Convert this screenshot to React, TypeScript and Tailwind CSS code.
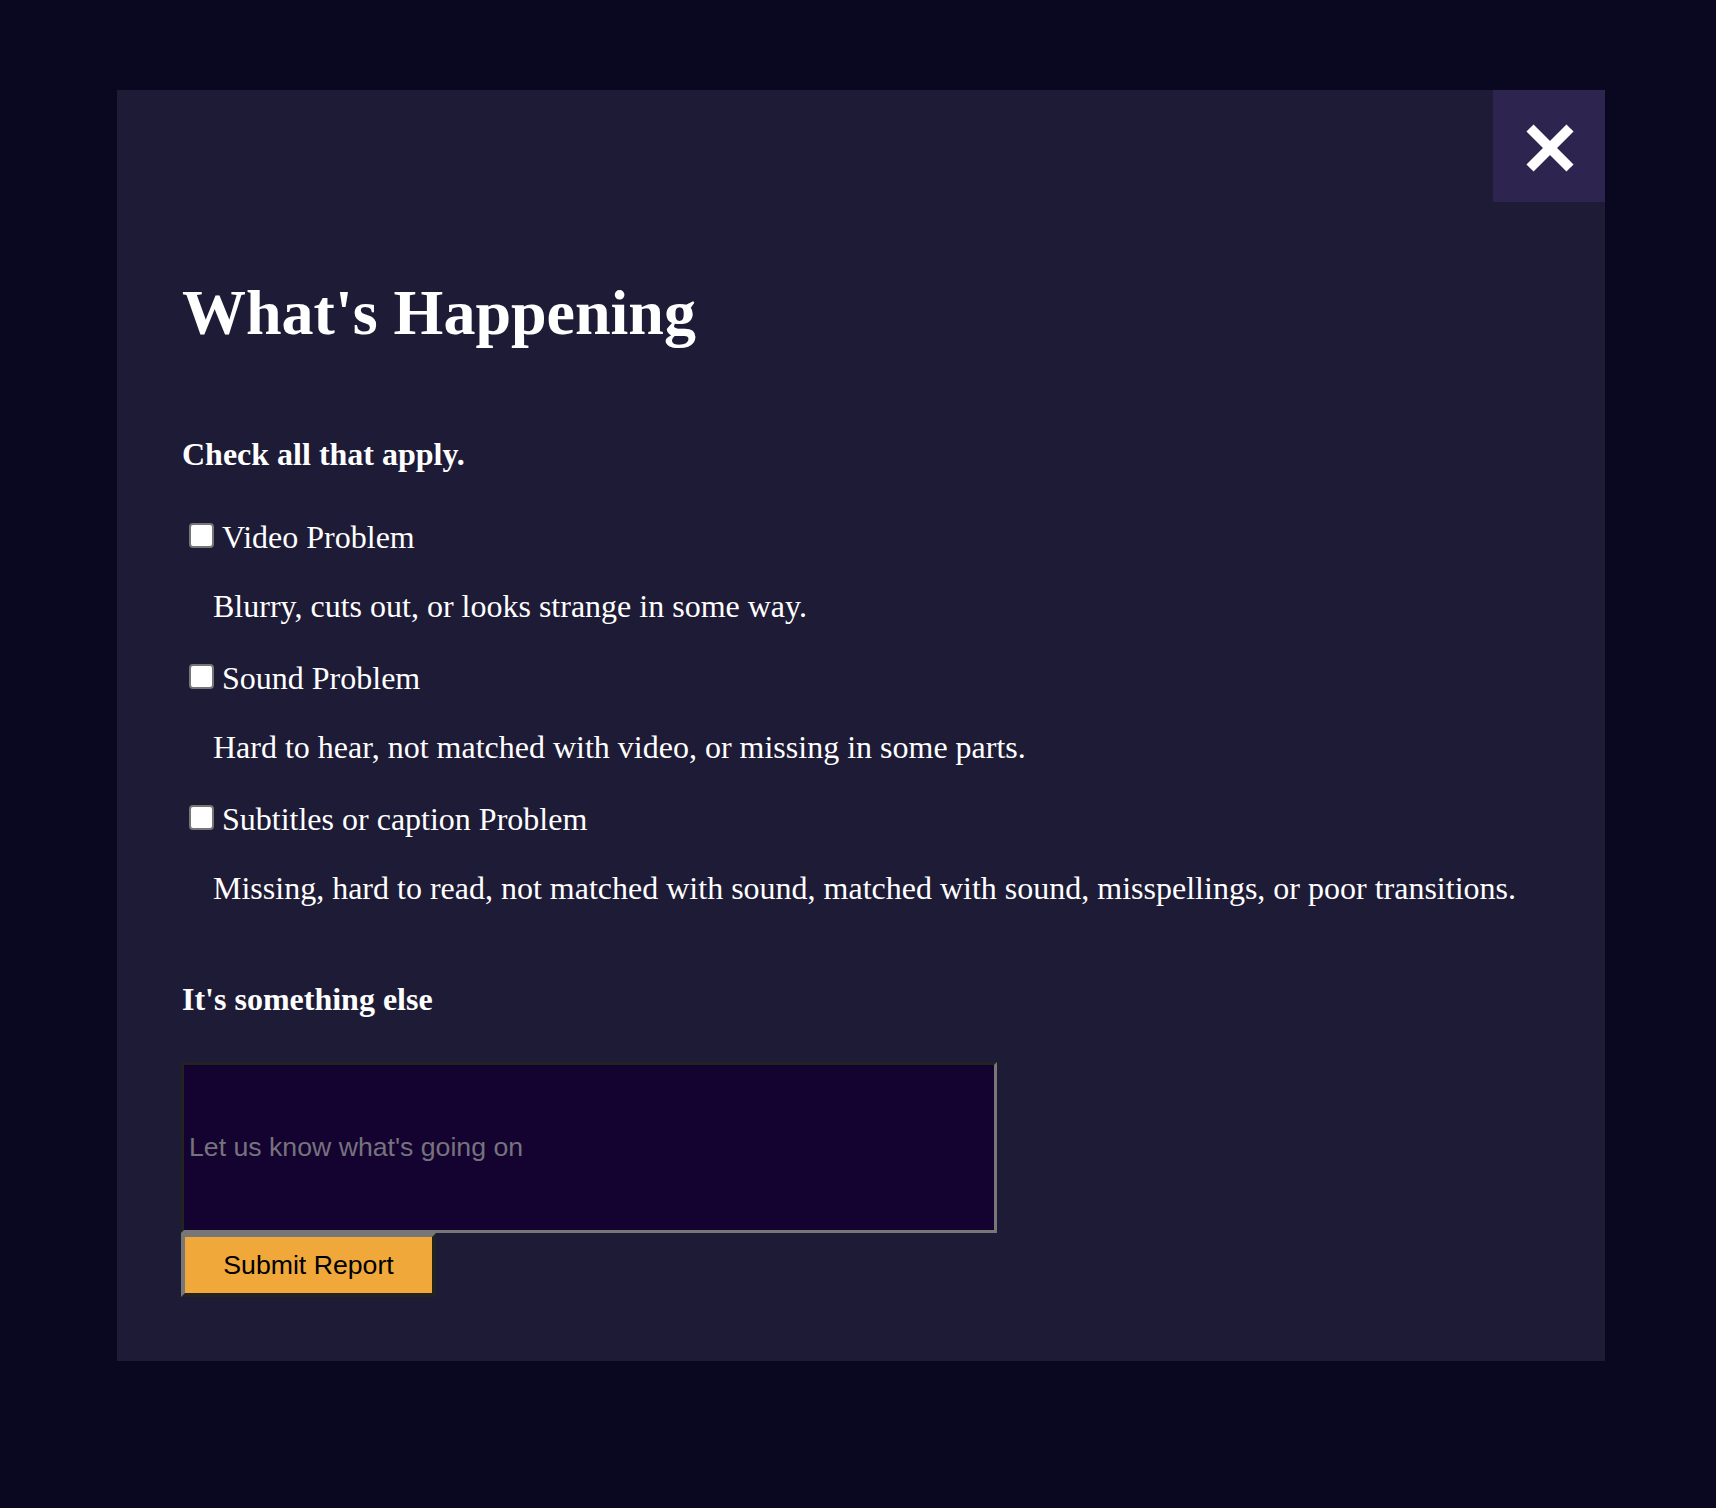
import { useState } from 'react';

const problems = [
  { id: 'video', label: 'Video Problem', desc: 'Blurry, cuts out, or looks strange in some way.' },
  { id: 'sound', label: 'Sound Problem', desc: 'Hard to hear, not matched with video, or missing in some parts.' },
  {
    id: 'subtitles',
    label: 'Subtitles or caption Problem',
    desc: 'Missing, hard to read, not matched with sound, matched with sound, misspellings, or poor transitions.',
  },
];

export default function App() {
  const [checked, setChecked] = useState<Record<string, boolean>>({});
  const [note, setNote] = useState('');

  return (
    <div className="min-h-screen bg-[#0a0720] pt-[90px] pb-[147px] font-['Liberation_Serif',serif] text-white">
      <div className="relative ml-[117px] w-[1488px] bg-[#1e1b36] pl-[65px] pt-[191px] pb-[64px]">
        {/* Close */}
        <button className="absolute right-0 top-0 flex h-[112px] w-[112px] items-center justify-center bg-[#2d2550]">
          <svg width="52" height="52" viewBox="0 0 52 52" className="ml-[2px] mt-[4px]">
            <path d="M6 6 L46 46 M46 6 L6 46" stroke="#ffffff" strokeWidth="10" fill="none" />
          </svg>
        </button>

        <h1 className="text-[64px] font-bold leading-[64px]">What's Happening</h1>

        <p className="mt-[93px] text-[32px] font-bold leading-[32px]">Check all that apply.</p>

        <div className="mt-[51px]">
          {problems.map((p, i) => (
            <div key={p.id} className={i > 0 ? 'mt-[40px]' : ''}>
              <label className="flex items-center text-[32px] leading-[32px]">
                <input
                  type="checkbox"
                  checked={!!checked[p.id]}
                  onChange={(e) => setChecked({ ...checked, [p.id]: e.target.checked })}
                  className="ml-[7px] mr-[8px] mb-[3px] h-[25px] w-[25px] appearance-none rounded-[4px] border-[2px] border-[#767676] bg-white checked:bg-[#3b82f6]"
                />
                {p.label}
              </label>
              <p className="mt-[37px] pl-[31px] text-[32px] leading-[32px]">{p.desc}</p>
            </div>
          ))}
        </div>

        <p className="mt-[79px] text-[32px] font-bold leading-[32px]">It's something else</p>

        <input
          type="text"
          value={note}
          onChange={(e) => setNote(e.target.value)}
          placeholder="Let us know what's going on"
          className="mt-[47px] block h-[171px] w-[816px] -ml-[1px] border-[3px] border-t-[#222222] border-l-[#222222] border-b-[#777777] border-r-[#777777] bg-[#140330] pl-[5px] font-['Liberation_Sans',Arial,sans-serif] text-[26.67px] text-white placeholder:text-[#76727e] outline-none"
        />

        <button className="-ml-[1px] block h-[64px] w-[255px] border-[4px] border-t-[#777777] border-l-[#777777] border-b-[#222222] border-r-[#222222] bg-[#f0a83b] font-['Liberation_Sans',Arial,sans-serif] text-[26.67px] text-black">
          Submit Report
        </button>
      </div>
    </div>
  );
}
